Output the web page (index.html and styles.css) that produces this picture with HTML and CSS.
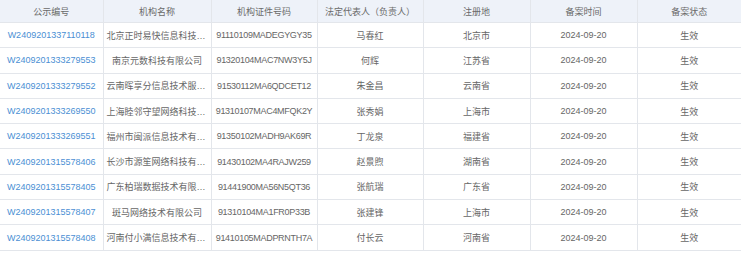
FILE: index.html
```html
<!DOCTYPE html>
<html lang="zh-CN">
<head>
<meta charset="utf-8">
<title>备案公示</title>
<link rel="stylesheet" href="styles.css">
</head>
<body>
<table class="grid">
<colgroup>
<col class="c1"><col class="c2"><col class="c3"><col class="c4"><col class="c5"><col class="c6"><col class="c7">
</colgroup>
<thead>
<tr><th>公示编号</th><th>机构名称</th><th>机构证件号码</th><th>法定代表人（负责人）</th><th>注册地</th><th>备案时间</th><th>备案状态</th></tr>
</thead>
<tbody>
<tr><td class="link">W2409201337110118</td><td class="name">北京正时易快信息科技有限公司</td><td class="code">91110109MADEGYGY35</td><td>马春红</td><td>北京市</td><td>2024-09-20</td><td>生效</td></tr>
<tr><td class="link">W2409201333279553</td><td class="name">南京元数科技有限公司</td><td class="code">91320104MAC7NW3Y5J</td><td>何辉</td><td>江苏省</td><td>2024-09-20</td><td>生效</td></tr>
<tr><td class="link">W2409201333279552</td><td class="name">云南晖享分信息技术服务有限公司</td><td class="code">91530112MA6QDCET12</td><td>朱金昌</td><td>云南省</td><td>2024-09-20</td><td>生效</td></tr>
<tr><td class="link">W2409201333269550</td><td class="name">上海睦邻守望网络科技有限公司</td><td class="code">91310107MAC4MFQK2Y</td><td>张秀娟</td><td>上海市</td><td>2024-09-20</td><td>生效</td></tr>
<tr><td class="link">W2409201333269551</td><td class="name">福州市闽派信息技术有限公司</td><td class="code">91350102MADH9AK69R</td><td>丁龙泉</td><td>福建省</td><td>2024-09-20</td><td>生效</td></tr>
<tr><td class="link">W2409201315578406</td><td class="name">长沙市源笙网络科技有限公司</td><td class="code">91430102MA4RAJW259</td><td>赵景煦</td><td>湖南省</td><td>2024-09-20</td><td>生效</td></tr>
<tr><td class="link">W2409201315578405</td><td class="name">广东柏瑞数据技术有限公司</td><td class="code">91441900MA56N5QT36</td><td>张航瑞</td><td>广东省</td><td>2024-09-20</td><td>生效</td></tr>
<tr><td class="link">W2409201315578407</td><td class="name">斑马网络技术有限公司</td><td class="code">91310104MA1FR0P33B</td><td>张建锋</td><td>上海市</td><td>2024-09-20</td><td>生效</td></tr>
<tr><td class="link">W2409201315578408</td><td class="name">河南付小满信息技术有限公司</td><td class="code">91410105MADPRNTH7A</td><td>付长云</td><td>河南省</td><td>2024-09-20</td><td>生效</td></tr>
</tbody>
</table>
</body>
</html>
```
FILE: styles.css
```css
html, body {
  margin: 0;
  padding: 0;
  background: #ffffff;
}
body {
  font-family: "Liberation Sans", "Noto Sans CJK SC", sans-serif;
  font-size: 9px;
  color: #666666;
}
.grid {
  width: 741px;
  table-layout: fixed;
  border-collapse: collapse;
}
.c1 { width: 103px; }
.c2 { width: 108px; }
.c3 { width: 106px; }
.c4 { width: 106px; }
.c5 { width: 107px; }
.c6 { width: 107px; }
.c7 { width: 104px; }
.grid th,
.grid td {
  padding: 0 3px;
  text-align: center;
  white-space: nowrap;
  overflow: hidden;
  text-overflow: ellipsis;
  border-right: 1px solid #e3e6eb;
  border-bottom: 1px solid #e3e6eb;
}
.grid th:last-child,
.grid td:last-child {
  border-right: none;
}
.grid th {
  height: 22px;
  background: #eef2f9;
  font-weight: normal;
  color: #6a6a6a;
}
.grid td {
  height: 24.3px;
}
.grid td.link {
  color: #4a8fd4;
}
.grid td.code {
  padding: 0;
  letter-spacing: -0.3px;
  text-overflow: clip;
}
```
